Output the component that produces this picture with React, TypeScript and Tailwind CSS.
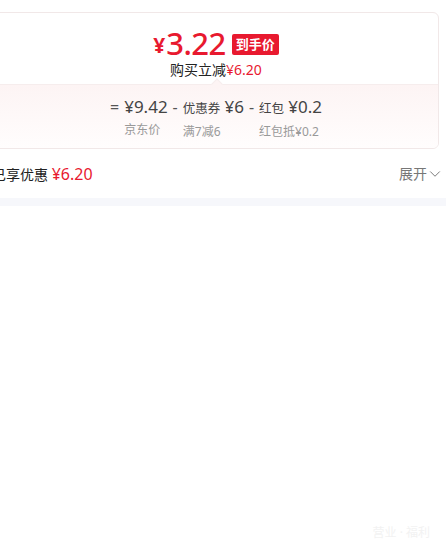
import { ChevronDown } from 'lucide-react';

const font = { fontFamily: '"Noto Sans", "Noto Sans CJK SC", sans-serif' };

export default function App() {
    return (
        <div className="relative min-h-[552px] w-[446px] overflow-hidden bg-white text-[#333]" style={font}>
            {/* ── Price card ── */}
            <div className="pt-[12px] pr-[7px]">
                <div className="-ml-[7px] rounded-[6px] border border-[#f1e8e8] overflow-hidden">
                    <div className="flex flex-col items-center h-[71px] pt-[15px]">
                        <div className="flex items-center h-[30px]">
                            <span className="text-[21px] font-bold text-[#e8192f] leading-[30px] mt-[3px] mr-[1px]">¥</span>
                            <span className="text-[31px] font-medium text-[#e8192f] leading-[30px] tracking-[-0.5px]">3.22</span>
                            <span className="ml-[6px] mt-[2px] h-[21px] px-[4px] rounded-[2px] bg-[#e8192f] text-white text-[13px] font-bold leading-[21px]">到手价</span>
                        </div>
                        <div className="mt-[3px] text-[14px] leading-[18px] text-[#222]">
                            购买立减<span className="text-[#e8192f]">¥6.20</span>
                        </div>
                    </div>
                    <div className="relative border-t border-[#f6eded] bg-gradient-to-b from-[#fdf4f4] to-[#fffdfd] h-[64px] flex justify-center pt-[10px]">
                        <div className="absolute -top-[5px] left-[219px] w-[8px] h-[8px] rotate-45 bg-[#fdf4f4] border-l border-t border-[#f6eded]" />
                        <div className="flex items-start gap-[5px]">
                            <span className="text-[16px] leading-[24px] text-[#555]">=</span>
                            <div className="flex flex-col">
                                <span className="text-[17px] leading-[24px] text-[#444]">¥9.42</span>
                                <span className="text-[12px] leading-[20px] text-[#999] mt-[1px]">京东价</span>
                            </div>
                            <span className="text-[16px] leading-[24px] text-[#555]">-</span>
                            <div className="flex flex-col">
                                <span className="leading-[24px] text-[#444]"><span className="text-[12.5px]">优惠券</span> <span className="text-[17px]">¥6</span></span>
                                <span className="text-[12px] leading-[20px] text-[#999] mt-[1px]">满7减6</span>
                            </div>
                            <span className="text-[16px] leading-[24px] text-[#555]">-</span>
                            <div className="flex flex-col">
                                <span className="leading-[24px] text-[#444]"><span className="text-[12.5px]">红包</span> <span className="text-[17px]">¥0.2</span></span>
                                <span className="text-[12px] leading-[20px] text-[#999] mt-[1px]">红包抵¥0.2</span>
                            </div>
                        </div>
                    </div>
                </div>
            </div>

            {/* ── Saved row ── */}
            <div className="flex items-center justify-between h-[49px] -ml-[8px] pr-[2px]">
                <div className="text-[14px] text-[#222]">
                    已享优惠 <span className="text-[16px] text-[#e8192f]">¥6.20</span>
                </div>
                <div className="flex items-center text-[14px] text-[#777]">
                    展开
                    <ChevronDown className="w-[18px] h-[18px] -ml-[1px]" strokeWidth={1.3} />
                </div>
            </div>
            <div className="h-[8px] bg-[#f6f7fb]" />

            <div className="absolute right-[16px] bottom-[10px] text-[12px] text-[#f2f2f2]">营业 · 福利</div>
        </div>
    );
}
